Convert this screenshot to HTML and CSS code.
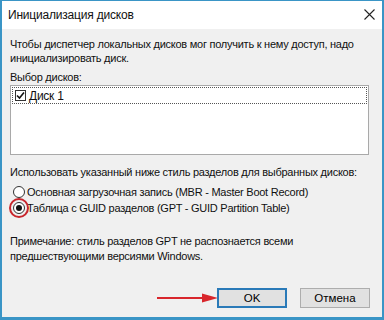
FILE: index.html
```html
<!DOCTYPE html>
<html lang="ru">
<head>
<meta charset="utf-8">
<link rel="stylesheet" href="styles.css">
</head>
<body>
<div class="window">
  <div class="titlebar">
    <span class="title">Инициализация дисков</span>
    <svg class="close" width="11" height="11" viewBox="0 0 11 11"><path d="M0.5 0.5L10.5 10.5M10.5 0.5L0.5 10.5" stroke="#222" stroke-width="1.1" fill="none"/></svg>
  </div>
  <div class="content">
    <p class="intro">Чтобы диспетчер локальных дисков мог получить к нему доступ, надо инициализировать диск.</p>
    <p class="label">Выбор дисков:</p>
    <div class="listbox">
      <div class="item">
        <span class="check"><svg width="9" height="9" viewBox="0 0 9 9"><path d="M1 4.5L3.5 7L8 1.5" stroke="#111" stroke-width="1.6" fill="none"/></svg></span>
        <span class="item-text">Диск 1</span>
      </div>
    </div>
    <p class="label style-label">Использовать указанный ниже стиль разделов для выбранных дисков:</p>
    <div class="radio-row first"><span class="radio"></span><span>Основная загрузочная запись (MBR - Master Boot Record)</span></div>
    <div class="radio-row"><span class="radio checked"></span><span>Таблица с GUID разделов (GPT - GUID Partition Table)</span><span class="mark-circle"></span></div>
    <p class="note">Примечание: стиль разделов GPT не распознается всеми<br>предшествующими версиями Windows.</p>
    <div class="buttons">
      <svg class="arrow" width="62" height="10" viewBox="0 0 62 10"><path d="M0 5H50" stroke="#d8262c" stroke-width="2"/><path d="M45 0.5L61 5L45 9.5Z" fill="#d8262c"/></svg>
      <button class="btn default">OK</button>
      <button class="btn">Отмена</button>
    </div>
  </div>
</div>
</body>
</html>
```
FILE: styles.css
```css
html, body {
  margin: 0;
  padding: 0;
  width: 384px;
  height: 320px;
  overflow: hidden;
  background: #ffffff;
}
.window {
  box-sizing: border-box;
  width: 384px;
  height: 320px;
  border: 2px solid #3a95c6;
  border-top-width: 1px;
  border-bottom-width: 3px;
  display: flex;
  flex-direction: column;
  font-family: "Liberation Sans", Arial, sans-serif;
  font-size: 11px;
  letter-spacing: -0.25px;
  color: #111;
}
.titlebar {
  height: 28px;
  background: #ffffff;
  display: flex;
  align-items: center;
  justify-content: space-between;
  padding: 0 7px 0 6px;
  flex: none;
}
.title {
  font-size: 12px;
  letter-spacing: -0.2px;
  color: #111;
}
.close { display: block; margin-top: -1px; }
.content {
  flex: 1;
  background: #f0f0f0;
  padding: 8px 12px 0 8px;
  display: flex;
  flex-direction: column;
}
p { margin: 0; }
.intro {
  line-height: 14px;
}
.label {
  margin-top: 5px;
  line-height: 14px;
}
.listbox {
  margin-top: 1px;
  height: 70px;
  box-sizing: border-box;
  background: #ffffff;
  border: 1px solid #a9a9a9;
  padding: 1px;
  margin-right: 1px;
}
.item {
  display: flex;
  align-items: center;
  height: 17px;
  box-sizing: border-box;
  border: 1px dotted #555;
  padding-left: 2px;
}
.check {
  width: 11px;
  height: 11px;
  box-sizing: border-box;
  border: 1px solid #333;
  background: #fff;
  display: flex;
  align-items: center;
  justify-content: center;
  margin-right: 3px;
}
.check svg { display: block; }
.item-text { font-size: 12px; }
.style-label { margin-top: 10px; }
.radio-row {
  position: relative;
  display: flex;
  align-items: center;
  height: 16px;
}
.radio-row.first { margin-top: 5px; }
.radio {
  width: 12px;
  height: 12px;
  box-sizing: border-box;
  border: 1px solid #333;
  border-radius: 50%;
  background: #fff;
  margin: 0 2px 0 3px;
  position: relative;
  flex: none;
}
.radio.checked::after {
  content: "";
  position: absolute;
  left: 2px;
  top: 2px;
  width: 6px;
  height: 6px;
  border-radius: 50%;
  background: #111;
}
.mark-circle {
  position: absolute;
  left: -1px;
  top: -2px;
  width: 20px;
  height: 20px;
  box-sizing: border-box;
  border: 2px solid #c8262c;
  border-radius: 50%;
}
.note {
  margin-top: 18px;
  line-height: 15px;
}
.buttons {
  margin-top: auto;
  margin-bottom: 9px;
  display: flex;
  align-items: center;
  justify-content: flex-end;
  gap: 13px;
}
.arrow { margin-right: -15px; }
.btn {
  width: 70px;
  height: 20px;
  box-sizing: border-box;
  background: #e1e1e1;
  border: 1px solid #adadad;
  font-family: "Liberation Sans", Arial, sans-serif;
  font-size: 11.5px;
  color: #000;
  padding: 0;
}
.btn.default {
  border: 2px solid #2a7ab8;
}
```
